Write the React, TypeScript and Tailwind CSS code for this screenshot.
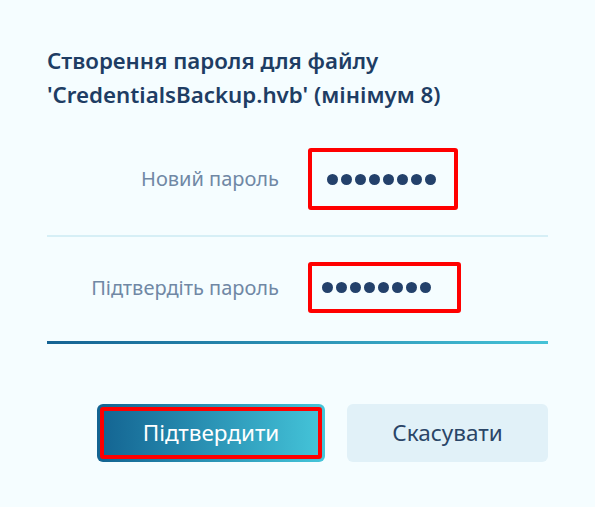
import React from 'react';

function Dots() {
    return (
        <div className="flex gap-[3px]">
            {Array.from({ length: 8 }).map((_, i) => (
                <span key={i} className="block h-[11px] w-[11px] rounded-full bg-[#23416b]" />
            ))}
        </div>
    );
}

export default function App() {
    return (
        <div className="min-h-screen bg-[#f5fdff] px-[47px] pt-[44px] font-['Noto_Sans',sans-serif]">
            <h1 className="text-[22.3px] font-semibold leading-[34px] text-[#1e3d64]">
                Створення пароля для файлу
                <br />
                'CredentialsBackup.hvb' (мінімум 8)
            </h1>

            <div className="mt-[36px] flex items-center">
                <label className="w-[232px] text-right text-[20px] text-[#7088a5]">
                    Новий пароль
                </label>
                <div className="ml-[29px] flex h-[62px] w-[150px] items-center rounded-[3px] border-4 border-[#ff0000] pl-[15px]">
                    <Dots />
                </div>
            </div>

            <hr className="mt-[25px] h-[2px] border-0 bg-[#d6eff6]" />

            <div className="mt-[25px] flex items-center">
                <label className="w-[232px] text-right text-[20px] text-[#7088a5]">
                    Підтвердіть пароль
                </label>
                <div className="ml-[29px] flex h-[51px] w-[153px] items-center rounded-[3px] border-4 border-[#ff0000] pl-[10px]">
                    <Dots />
                </div>
            </div>

            <div className="mt-[28px] h-[3px] bg-gradient-to-r from-[#156393] to-[#45c2d7]" />

            <div className="mt-[60px] flex gap-[22px] pl-[50px]">
                <button className="h-[58px] w-[228px] rounded-md bg-gradient-to-r from-[#136391] to-[#45c6da] p-[3px]">
                    <span className="flex h-full w-full items-center justify-center rounded-[3px] border-4 border-[#ff0000] text-[22.5px] text-white">
                        Підтвердити
                    </span>
                </button>
                <button className="h-[58px] w-[201px] rounded-md bg-[#e1f1f8] text-[22.5px] text-[#2a4567]">
                    Скасувати
                </button>
            </div>
        </div>
    );
}
